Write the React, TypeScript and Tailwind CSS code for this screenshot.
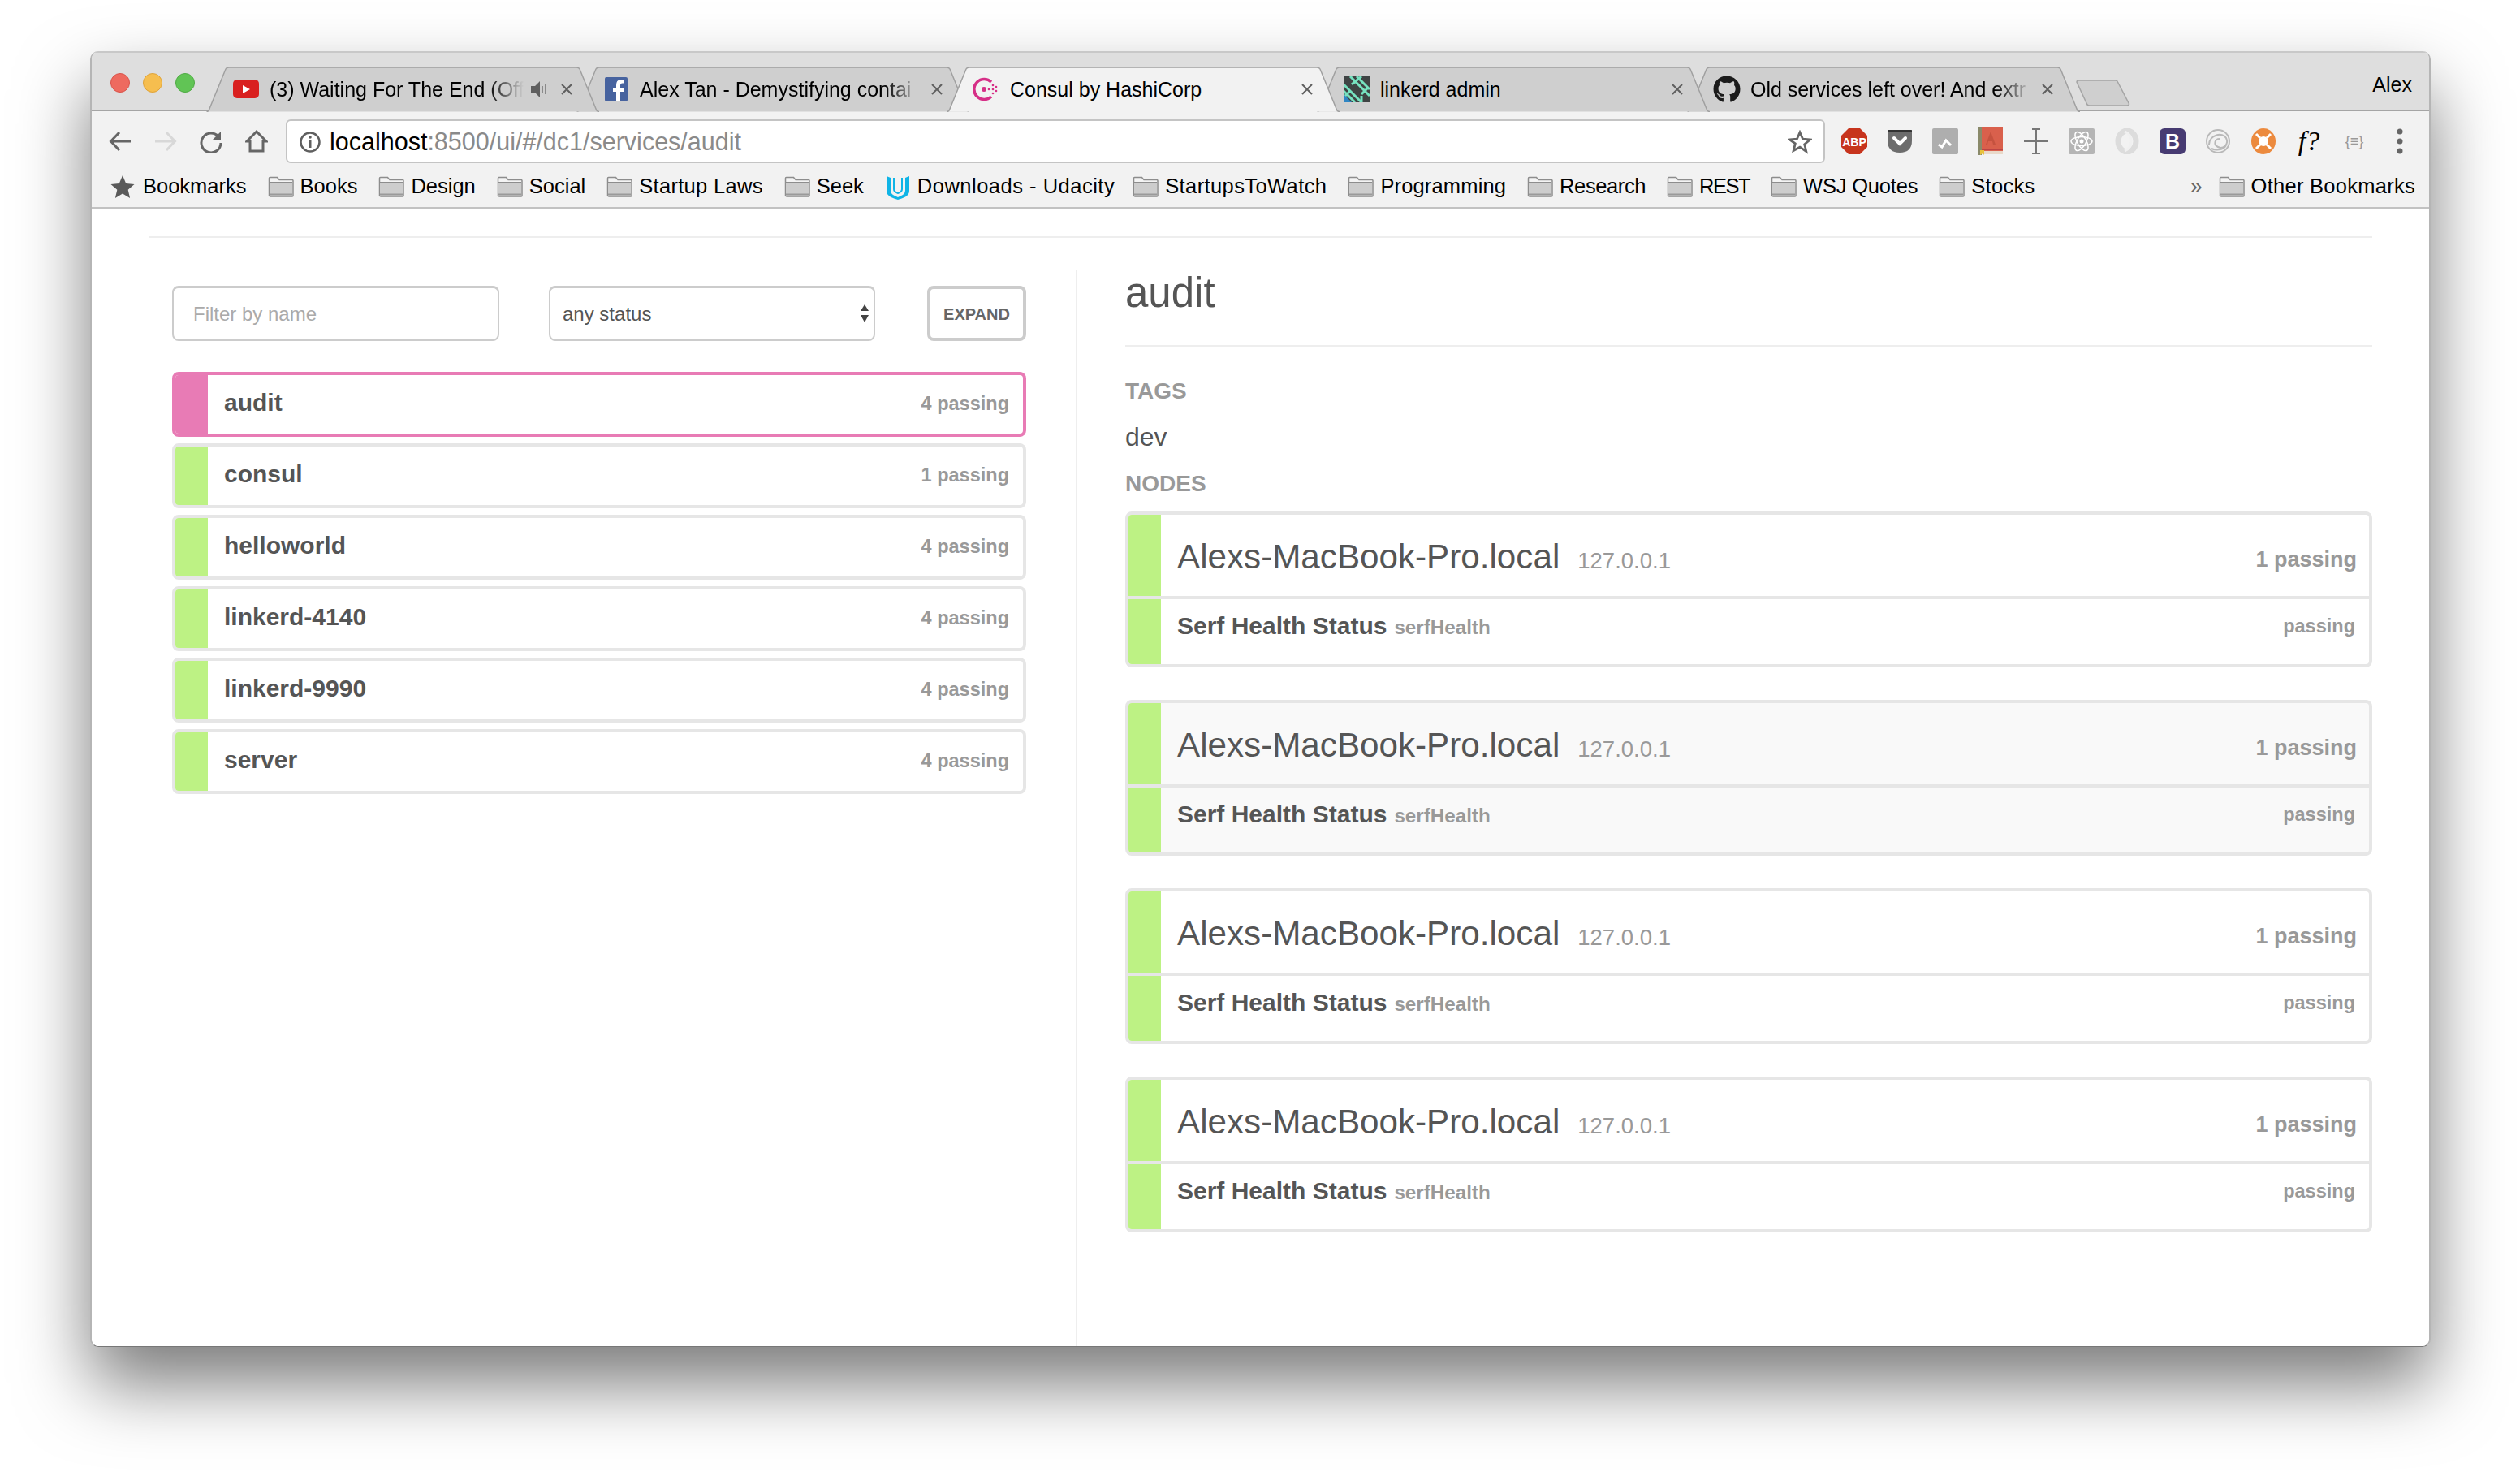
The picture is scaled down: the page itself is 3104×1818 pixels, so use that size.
import React from "react";
import { FaGithub } from "react-icons/fa";

const Folder = () => (
  <svg width="32" height="26" viewBox="0 0 32 26" className="shrink-0">
    <path d="M1.5 24V2.5q0-1 1-1h9l2.500 3h16q1 0 1 1V24q0 1-1 1h-27q-1 0-1-1z" fill="#f4f4f4" stroke="#8d8d8d" strokeWidth="1.500" />
    <rect x="2" y="8" width="28" height="16.500" fill="#cdcdcd" />
    <path d="M2 7.500h28" stroke="#8d8d8d" strokeWidth="1" />
    <path d="M2 22.500h28" stroke="#9a9a9a" strokeWidth="2" />
  </svg>
);

const Mark = ({ label, className }: { label: string; className?: string }) => (
  <div className="flex items-center gap-[8px]">
    <Folder />
    <span className={className}>{label}</span>
  </div>
);

const TabShape = ({ active }: { active?: boolean }) => (
  <svg width="484" height="56" viewBox="0 0 484 56" className="absolute inset-0">
    <path
      d="M0.500 55.500Q3 55.500 4 52L24 3Q25 1 28 1H456Q459 1 460 3L480 52Q481 55.500 484 55.500"
      fill={active ? "#f2f2f2" : "#cfcfcf"}
      stroke="#a0a0a0"
      strokeWidth="1.500"
    />
  </svg>
);

const Close = () => (
  <svg width="20" height="20" viewBox="0 0 20 20" className="absolute left-[434px] top-[18px]">
    <path d="M4 4L16 16M16 4L4 16" stroke="#5f5f5f" strokeWidth="2" />
  </svg>
);

const fade = "[mask-image:linear-gradient(to_right,black_calc(100%-44px),transparent)]";

const Tab = ({ icon, title, active, z, audio, fadeOut }: { icon: React.ReactNode; title: string; active?: boolean; z: string; audio?: boolean; fadeOut?: boolean }) => (
  <div className={`relative w-[484px] h-[56px] shrink-0 -ml-[28px] first:ml-0 ${z}`}>
    <TabShape active={active} />
    <div className="relative flex items-center h-[55px] pl-[32px] pr-[60px]">
      <div className="w-[34px] h-[34px] mr-[12px] flex items-center justify-center shrink-0">{icon}</div>
      <div className={`flex-1 min-w-0 whitespace-nowrap text-[25px] leading-[32px] text-black ${fadeOut ? fade : ""} ${audio ? "mr-[33px]" : ""}`}>{title}</div>
    </div>
    {audio && (
      <svg width="22" height="22" viewBox="0 0 22 22" className="absolute left-[399px] top-[17px]">
        <path d="M1 7h5l6-6v20l-6-6H1z" fill="#5f5f5f" />
        <path d="M15 7v8M19 5v12" stroke="#8a8a8a" strokeWidth="2" />
      </svg>
    )}
    <Close />
  </div>
);

const Extensions = () => (
  <div className="flex items-center">
    {[
      <svg width="34" height="34" viewBox="0 0 34 34"><path d="M10 1h14l9 9v14l-9 9H10l-9-9V10z" fill="#c7341d" /><text x="17" y="22.500" textAnchor="middle" fontSize="14" fontWeight="700" fill="#fff">ABP</text></svg>,
      <svg width="34" height="34" viewBox="0 0 34 34"><path d="M3 3h28q1 0 1 1v12q0 15-15 15T2 16V4q0-1 1-1z" fill="#6d6d6d" /><path d="M3 3h28q1 0 1 1v2H2V4q0-1 1-1z" fill="#333" /><path d="M10 13l7 7 7-7" fill="none" stroke="#fff" strokeWidth="4" strokeLinecap="round" /></svg>,
      <svg width="32" height="32" viewBox="0 0 32 32"><rect width="32" height="32" rx="2" fill="#aeaeae" /><path d="M8 20l4 3 5-8 6 6" fill="none" stroke="#fff" strokeWidth="3" /></svg>,
      <svg width="30" height="34" viewBox="0 0 30 34"><rect x="2" y="0" width="28" height="29" fill="#d9604c" /><rect x="0" y="0" width="4" height="34" fill="#8a8a6a" /><path d="M15 5l6 16h-3l-1-4h-5l-1 4H9z" fill="#c5523f" /><rect x="4" y="29" width="26" height="4" fill="#e9d9c9" /><rect x="4" y="26" width="26" height="2" fill="#b44" /><path d="M2 28h5v6l-2-2-3 2z" fill="#e8c23a" /></svg>,
      <svg width="32" height="32" viewBox="0 0 32 32"><path d="M16 1v30M1 16h30M11 1h10M11 31h10" stroke="#777" strokeWidth="2" fill="none" /></svg>,
      <svg width="32" height="32" viewBox="0 0 32 32"><rect width="32" height="32" rx="2" fill="#b5b5b5" /><g fill="none" stroke="#fff" strokeWidth="1.500"><ellipse cx="16" cy="16" rx="13" ry="5.500" /><ellipse cx="16" cy="16" rx="13" ry="5.500" transform="rotate(60 16 16)" /><ellipse cx="16" cy="16" rx="13" ry="5.500" transform="rotate(120 16 16)" /></g><circle cx="16" cy="16" r="2.500" fill="#fff" /></svg>,
      <svg width="32" height="32" viewBox="0 0 32 32"><ellipse cx="16" cy="16" rx="11" ry="13" fill="none" stroke="#dcdcdc" strokeWidth="7" /><path d="M13 4A13 13 0 0 1 13 28" fill="none" stroke="#f0f0f0" strokeWidth="3" /></svg>,
      <svg width="32" height="32" viewBox="0 0 32 32"><rect width="32" height="32" rx="6" fill="#473b72" /><text x="16" y="25" textAnchor="middle" fontSize="25" fontWeight="700" fill="#fff">B</text></svg>,
      <svg width="32" height="32" viewBox="0 0 32 32"><g fill="none" stroke="#b9b9b9" strokeWidth="2"><circle cx="16" cy="16" r="14" /><path d="M5 20C5 8 22 4 26 12s-4 14-10 11-4-10 2-10" /><path d="M8 25c4 2 14 3 18-4" /></g></svg>,
      <svg width="32" height="34" viewBox="0 0 32 34"><ellipse cx="16" cy="17" rx="15" ry="16" fill="#ec8a3e" /><circle cx="16" cy="17" r="6" fill="#fff" /><g stroke="#fff" strokeWidth="3"><path d="M7 8l5 5M25 8l-5 5M7 26l5-5M25 26l-5-5" /></g></svg>,
      <span className="text-[34px] leading-[34px] italic text-black [font-family:'Liberation_Serif',serif]">f?</span>,
      <span className="text-[18px] leading-[34px] font-normal text-[#999]">{"{≡}"}</span>,
      <svg width="10" height="32" viewBox="0 0 10 32"><circle cx="5" cy="4" r="3.500" fill="#666" /><circle cx="5" cy="16" r="3.500" fill="#666" /><circle cx="5" cy="28" r="3.500" fill="#666" /></svg>,
    ].map((x, i) => (
      <div key={i} className="w-[56px] h-[40px] flex items-center justify-center">{x}</div>
    ))}
  </div>
);

const Bar = ({ selected }: { selected?: boolean }) => (
  <div className={`w-10 shrink-0 ${selected ? "bg-[#e87bb5]" : "bg-[#bdf284]"}`} />
);

const Row = ({ name, count, selected }: { name: string; count: string; selected?: boolean }) => (
  <div className={`flex h-20 rounded-lg border-4 bg-white overflow-hidden ${selected ? "border-[#e87bb5]" : "border-[#e6e6e6]"}`}>
    <Bar selected={selected} />
    <div className="flex-1 flex items-center justify-between pl-5 pr-[17px]">
      <span className="mb-[5px] text-[30px] leading-[36px] font-bold text-[#555]">{name}</span>
      <span className="mb-[2px] text-[23.500px] leading-[36px] font-bold text-[#999]">{count}</span>
    </div>
  </div>
);

const Card = ({ tint }: { tint?: boolean }) => (
  <div className={`rounded-lg border-4 border-[#e6e6e6] overflow-hidden ${tint ? "bg-[#f9f9f9]" : "bg-white"}`}>
    <div className="flex h-[100px] border-b-4 border-[#e6e6e6] box-content">
      <Bar />
      <div className="flex-1 flex items-baseline pl-5 pr-[15px] pt-[27px]">
        <span className="text-[42.200px] leading-[50px] text-[#555]">Alexs-MacBook-Pro.local</span>
        <span className="ml-[22px] text-[27.500px] text-[#999]">127.0.0.1</span>
        <span className="ml-auto self-start mt-[12px] text-[27px] leading-[32px] font-bold text-[#999]">1 passing</span>
      </div>
    </div>
    <div className="flex h-20">
      <Bar />
      <div className="flex-1 flex items-baseline pl-5 pr-[17px] pt-[15px]">
        <span className="text-[30px] leading-[36px] font-bold text-[#555]">Serf Health Status</span>
        <span className="ml-[9px] text-[24.200px] font-bold text-[#999]">serfHealth</span>
        <span className="ml-auto self-start mt-[4px] text-[23.500px] leading-[28px] font-bold text-[#999]">passing</span>
      </div>
    </div>
  </div>
);

export default function App() {
  return (
    <div className="w-[3104px] h-[1818px] bg-white pt-[63px] pl-[111px] overflow-hidden antialiased [font-family:'Liberation_Sans',Arial,sans-serif]">
      <div className="w-[2883px] h-[1596px] rounded-[10px] bg-white flex flex-col shadow-[0_46px_88px_rgba(0,0,0,0.52)] overflow-hidden border-x-2 border-b border-x-[#b5b5b5] border-b-[#777]">
        {/* title bar */}
        <div className="h-[74px] shrink-0 bg-[#dedede] border-t-2 border-[#c8c8c8] relative flex items-end pl-[143px] -mx-[2px]">
          <div className="absolute left-[25px] top-[25px] flex gap-4">
            <div className="w-6 h-6 rounded-full bg-[#ee6a5f] border border-[#d9544b]" />
            <div className="w-6 h-6 rounded-full bg-[#f6be4f] border border-[#dfa33a]" />
            <div className="w-6 h-6 rounded-full bg-[#61c455] border border-[#50ab45]" />
          </div>
          <div className="absolute left-0 right-0 bottom-0 h-[2px] bg-[#a5a5a5]" />
          <div className="flex -mb-[1px] relative">
            <Tab z="z-50" audio fadeOut title="(3) Waiting For The End (Off" icon={
              <svg width="32" height="24" viewBox="0 0 32 24"><rect width="32" height="23" rx="5" fill="#d9201f" /><path d="M12 7l9 5-9 5z" fill="#fff" /></svg>
            } />
            <Tab z="z-40" fadeOut title="Alex Tan - Demystifying contai" icon={
              <svg width="28" height="30" viewBox="0 0 28 30"><rect width="28" height="30" rx="2" fill="#47639f" /><path d="M19 30V18h4l.6-5H19v-3q0-2.500 2.500-2.500H24V3h-3.500Q14 3 14 10v3h-4v5h4v12z" fill="#fff" /></svg>
            } />
            <Tab z="z-[60]" active title="Consul by HashiCorp" icon={
              <svg width="32" height="32" viewBox="0 0 32 32"><path d="M22 7A12.500 12.500 0 1 0 22 25" fill="none" stroke="#d62f87" strokeWidth="3.500" /><circle cx="13" cy="16" r="3" fill="#d62f87" /><g fill="#d62f87"><circle cx="19" cy="16" r="1.300" /><circle cx="24" cy="11" r="1.300" /><circle cx="28" cy="13" r="1.300" /><circle cx="24" cy="16" r="1.300" /><circle cx="28" cy="18" r="1.300" /><circle cx="24" cy="21" r="1.300" /></g></svg>
            } />
            <Tab z="z-30" title="linkerd admin" icon={
              <svg width="32" height="32" viewBox="0 0 32 32"><rect width="32" height="32" fill="#3f4444" /><g stroke="#77e2c0" strokeWidth="3" fill="none"><path d="M0 10l22 22M0 18l14 14M8 0l24 24M16 0l16 16" /><path d="M0 26l8-8M10 10l12-10M22 22l8-8M22 32v-8" /></g><path d="M0 22l10 10H0z" fill="#2f86c4" /></svg>
            } />
            <Tab z="z-20" fadeOut title="Old services left over! And extr" icon={<FaGithub size={34} color="#1b1b1b" />} />
          </div>
          <svg width="68" height="34" viewBox="0 0 68 34" className="absolute left-[2445px] top-[33px]">
            <path d="M2 3q0-2 3-2h44q3 0 3.500 2l14 27q0 2-3 2H18q-3 0-3.500-2z" fill="#cfcfcf" stroke="#a5a5a5" strokeWidth="1.500" />
          </svg>
          <div className="absolute right-[23px] top-[24px] text-[25px] leading-[30px] text-black">Alex</div>
        </div>
        {/* toolbar */}
        <div className="h-[70px] shrink-0 bg-[#f2f2f2] flex items-start pt-[10px] -mx-[2px] pl-[9px] relative">
          <div className="flex items-center h-[54px]">
            {[
              <svg width="28" height="26" viewBox="0 0 28 26"><path d="M27 13H3M13 2L2.500 13 13 24" fill="none" stroke="#666" strokeWidth="3" /></svg>,
              <svg width="28" height="26" viewBox="0 0 28 26"><path d="M1 13h24M15 2l10.500 11L15 24" fill="none" stroke="#d8d8d8" strokeWidth="3" /></svg>,
              <svg width="28" height="28" viewBox="0 0 28 28"><path d="M23 8A12 12 0 1 0 26 16" fill="none" stroke="#666" strokeWidth="3" /><path d="M26 2v10H16z" fill="#666" /></svg>,
              <svg width="28" height="28" viewBox="0 0 28 28"><path d="M14 2L2 14h4v12h16V14h4z" fill="none" stroke="#666" strokeWidth="3" /></svg>,
            ].map((x, i) => (
              <div key={i} className="w-[56px] flex justify-center">{x}</div>
            ))}
          </div>
          <div className="ml-[8px] w-[1896px] h-[54px] bg-white rounded-[6px] border-2 border-[#c4c4c4] flex items-center pl-[15px] pr-[14px] pt-[1px] text-[30.500px]">
            <svg width="26" height="26" viewBox="0 0 26 26" className="shrink-0"><circle cx="13" cy="13" r="11.500" fill="none" stroke="#5f5f5f" strokeWidth="2.500" /><path d="M13 11v9" stroke="#5f5f5f" strokeWidth="3" /><circle cx="13" cy="7" r="1.800" fill="#5f5f5f" /></svg>
            <span className="ml-[11px] text-black">localhost</span>
            <span className="text-[#8a8a8a]">:8500/ui/#/dc1/services/audit</span>
            <svg width="30" height="30" viewBox="0 0 30 30" className="ml-auto"><path d="M15 3l3.600 8.200 8.900.8-6.800 5.800 2.100 8.700L15 21.200l-7.800 4.300 2.100-8.700L2.500 12l8.900-.8z" fill="none" stroke="#666" strokeWidth="2.800" /></svg>
          </div>
          <div className="ml-[8px] h-[54px] flex items-center"><Extensions /></div>
        </div>
        {/* bookmarks */}
        <div className="h-[50px] shrink-0 bg-[#f2f2f2] border-b-2 border-[#c2c2c2] -mx-[2px] flex items-center gap-[26px] pl-[25px] pr-[19px] text-[25.500px] text-black pb-[3px]">
          <div className="flex items-center gap-[10px]">
            <svg width="30" height="30" viewBox="0 0 30 30"><path d="M15 1l4.200 10 10.300.9-7.800 6.800 2.400 10.200L15 23.500l-9.100 5.400 2.400-10.200L.5 11.900 10.800 11z" fill="#5a5a5a" /></svg>
            <span>Bookmarks</span>
          </div>
          <Mark label="Books" />
          <Mark label="Design" />
          <Mark label="Social" />
          <Mark label="Startup Laws" className="tracking-[0.3px]" />
          <Mark label="Seek" />
          <div className="flex items-center gap-[8px]">
            <svg width="32" height="32" viewBox="0 0 32 32"><path d="M2 3l5 2v15c0 6 5 7 9 9 4-2 9-3 9-9V5l5-2v18c0 7-8 9-14 11C10 30 2 28 2 21z" fill="#0fb4e6" /><path d="M11 5v14c0 3 2 4 5 5 3-1 5-2 5-5V5" fill="none" stroke="#0fb4e6" strokeWidth="2" /></svg>
            <span className="tracking-[0.5px] -mr-[4px]">Downloads - Udacity</span>
          </div>
          <Mark label="StartupsToWatch" className="tracking-[0.4px]" />
          <Mark label="Programming" className="tracking-[0.15px]" />
          <Mark label="Research" className="tracking-[-0.4px]" />
          <Mark label="REST" className="tracking-[-1.5px]" />
          <Mark label="WSJ Quotes" className="tracking-[-0.2px]" />
          <Mark label="Stocks" className="tracking-[0.3px]" />
          <span className="ml-auto text-[#666] -mr-[6px]">»</span>
          <Mark label="Other Bookmarks" className="tracking-[0.27px]" />
        </div>
        {/* page */}
        <div className="flex-1 min-h-0 bg-white pl-[70px] pr-[70px]">
          <div className="mt-[34px] h-[2px] bg-[#eeeeee]" />
          <div className="mt-[39px] flex h-[1400px]">
            <div className="w-[1144px] shrink-0 border-r-2 border-[#eeeeee] pl-[29px] pr-[61px] pt-[20px]">
              <div className="flex h-[68px]">
                <input placeholder="Filter by name" className="w-[403px] h-full rounded-lg border-2 border-t-[3px] border-[#cccccc] bg-white px-6 text-[24px] outline-none placeholder:text-[#aaaaaa]" />
                <div className="relative ml-[61px] w-[402px] h-full">
                  <select className="appearance-none w-full h-full rounded-lg border-2 border-t-[3px] border-[#cccccc] bg-white pl-[15px] text-[24px] text-[#555] outline-none">
                    <option>any status</option>
                  </select>
                  <svg width="12" height="24" viewBox="0 0 12 24" className="absolute right-[7px] top-[22px]"><path d="M6 1l5 8H1zM1 14h10l-5 9z" fill="#444" /></svg>
                </div>
                <button className="ml-auto w-[122px] h-full rounded-lg border-4 border-[#cccccc] bg-white pt-[1px] text-[20px] font-bold text-[#666]">EXPAND</button>
              </div>
              <div className="mt-[38px] flex flex-col gap-2">
                <Row selected name="audit" count="4 passing" />
                <Row name="consul" count="1 passing" />
                <Row name="helloworld" count="4 passing" />
                <Row name="linkerd-4140" count="4 passing" />
                <Row name="linkerd-9990" count="4 passing" />
                <Row name="server" count="4 passing" />
              </div>
            </div>
            <div className="flex-1 min-w-0 pl-[59px] pt-[9px]">
              <h2 className="text-[51px] leading-[40px] text-[#555]">audit</h2>
              <div className="mt-[44px] h-[2px] bg-[#eeeeee]" />
              <div className="mt-[39px] text-[28px] leading-[32px] font-bold text-[#999]">TAGS</div>
              <div className="mt-[20px] text-[32px] leading-[40px] text-[#555]">dev</div>
              <div className="mt-[22px] text-[28px] leading-[32px] font-bold text-[#999]">NODES</div>
              <div className="mt-[18px] flex flex-col gap-10">
                <Card />
                <Card tint />
                <Card />
                <Card />
              </div>
            </div>
          </div>
        </div>
      </div>
    </div>
  );
}
